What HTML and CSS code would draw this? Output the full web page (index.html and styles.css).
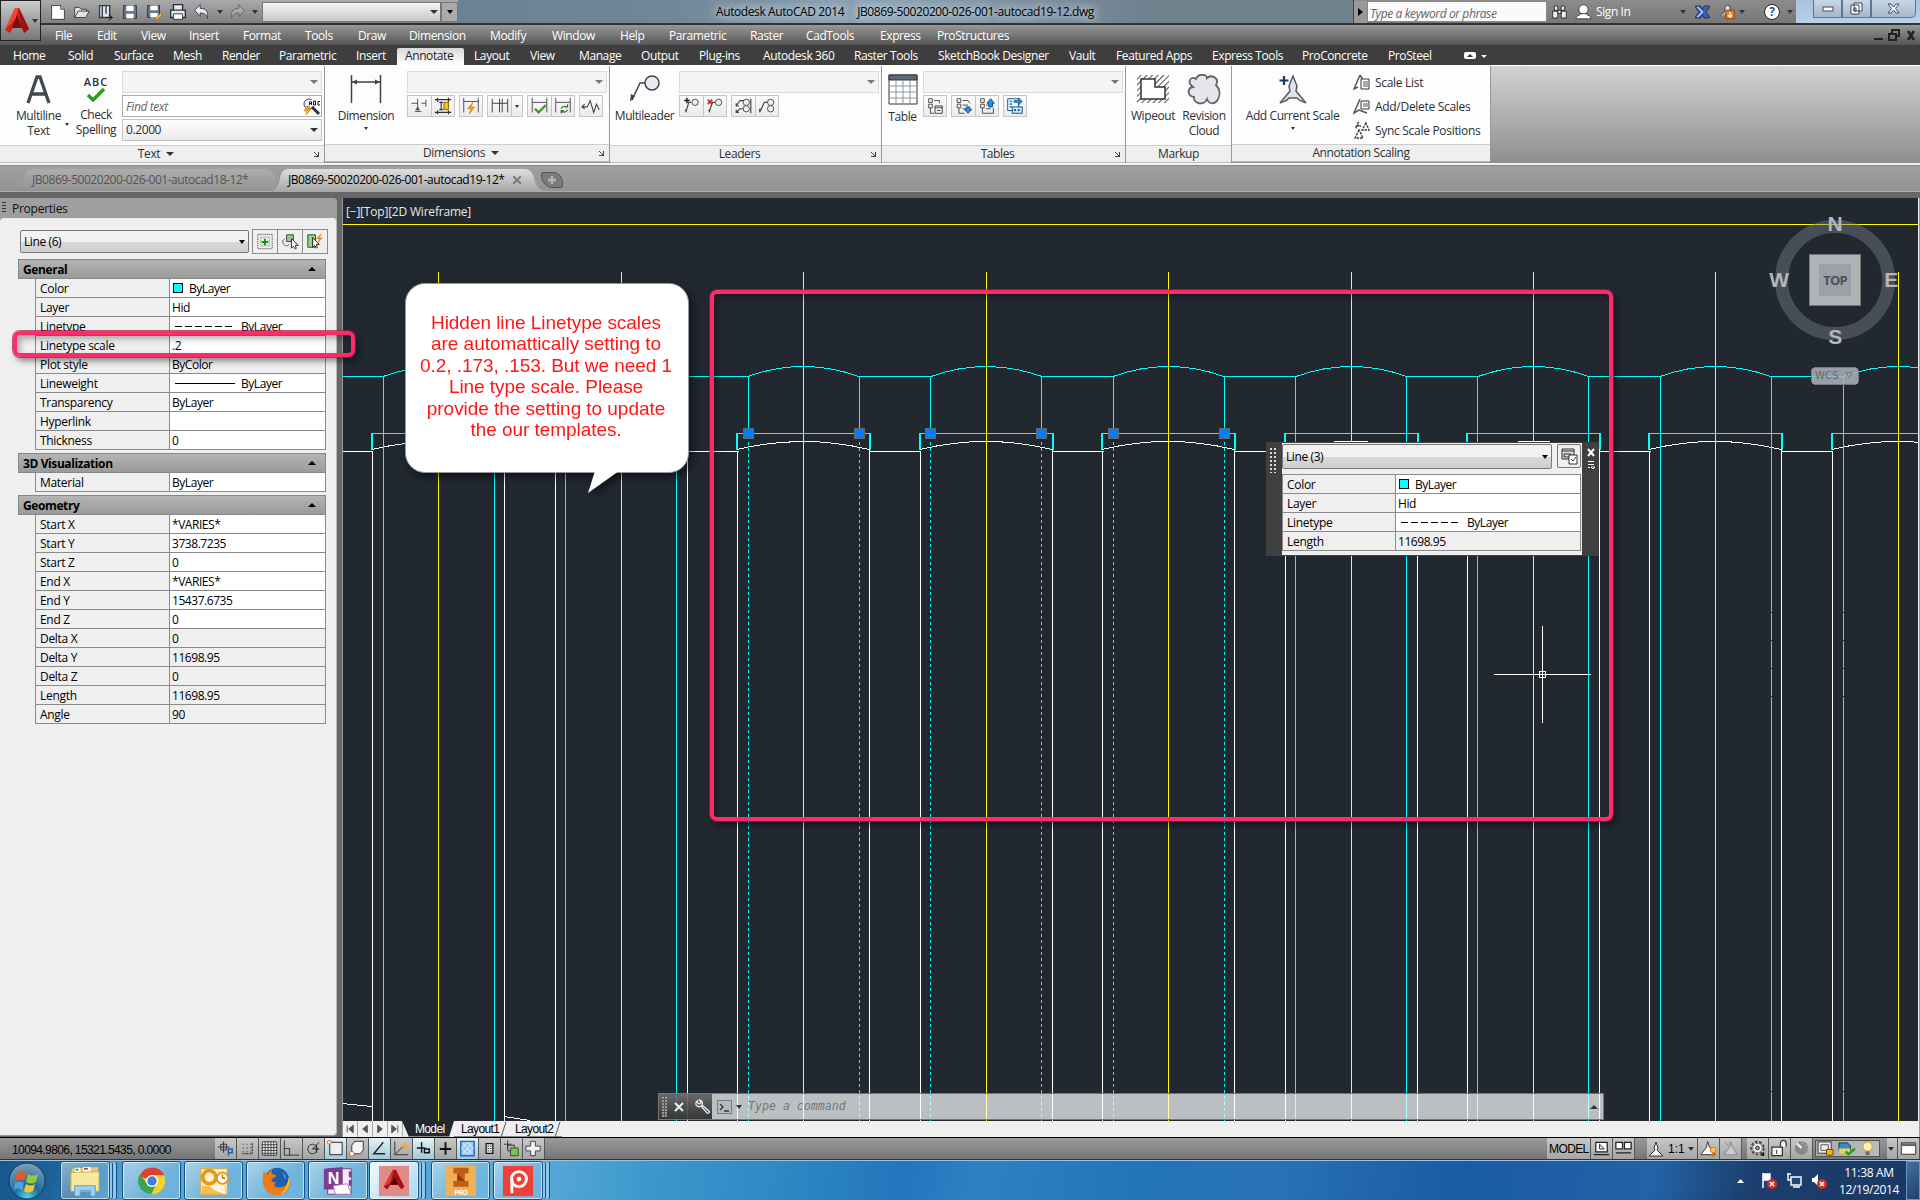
FILE: index.html
```
<!DOCTYPE html>
<html lang="en">
<head>
    <meta charset="UTF-8">
    <meta name="viewport" content="width=device-width, initial-scale=1.0">
    <title>Autodesk AutoCAD 2014</title>
    <link rel="stylesheet" href="styles.css">
</head>
<body>
    <div class="app">
        <!-- Title bar -->
        <header class="titlebar">
            <div class="quick-access">
                <svg class="qi" viewBox="0 0 24 24"><path d="M5 5h10l4 4v11H5z" fill="#fff" stroke="#333c46"/><path d="M15 5v4h4" fill="#ccc" stroke="#333c46"/></svg>
                <svg class="qi" viewBox="0 0 24 24"><path d="M4 18V7h5l2 2h6v3M4 18l4-7h12l-4 7z" fill="#dde3ea" stroke="#333c46"/></svg>
                <svg class="qi" viewBox="0 0 24 24"><path d="M5 5h11v13H5zM8 5v13M12 5v9" fill="#e4e8ee" stroke="#333c46" stroke-width="1.5"/><path d="M15 15l4 3-4 3M12 18h7" fill="none" stroke="#111"/></svg>
                <svg class="qi" viewBox="0 0 24 24"><path d="M5 5h14v14H5z" fill="#6b7889" stroke="#27313d"/><path d="M8 5h8v6H8zM8 14h8v5H8z" fill="#fff"/></svg>
                <svg class="qi" viewBox="0 0 24 24"><path d="M5 5h13v13H5z" fill="#6b7889" stroke="#27313d"/><path d="M8 5h8v5H8zM8 13h8v5H8z" fill="#fff"/><path d="M13 20l6-7 2 2-6 6z" fill="#f4b942" stroke="#8a5a10" stroke-width=".7"/></svg>
                <svg class="qi" viewBox="0 0 24 24"><path d="M7 10V4h10v6M4 10h16v8H4z" fill="#e8e8e8" stroke="#27313d" stroke-width="1.5"/><path d="M7 14h10v6H7z" fill="#fff" stroke="#27313d"/></svg>
                <svg class="qi" viewBox="0 0 24 24"><path d="M4 10l6-6v4c7 0 9 4 8 11-1-4-3-6-8-6v4z" fill="#e8edf2" stroke="#333c46"/></svg>
                <i class="caret"></i>
                <svg class="qi redo" viewBox="0 0 24 24"><path d="M20 10l-6-6v4c-7 0-9 4-8 11 1-4 3-6 8-6v4z" fill="#aaa" stroke="#666"/></svg>
                <i class="caret"></i>
                <div class="workspace"><i class="caret"></i></div>
                <div class="qa-more"><i class="caret"></i></div>
            </div>
            <div class="title"><span>Autodesk AutoCAD 2014</span><span>JB0869-50020200-026-001-autocad19-12.dwg</span></div>
            <div class="infocenter">
                <div class="ic-arrow"><svg width="6" height="8"><path d="M0 0l5 4-5 4z"/></svg></div>
                <div class="ic-search">Type a keyword or phrase</div>
                <svg class="ic-bino" viewBox="0 0 20 20"><path d="M4 3h4v5H4zM12 3h4v5h-4zM2 9h6v8H2zM12 9h6v8h-6zM8 8h4v4H8z" fill="#eee" stroke="#222"/></svg>
                <svg class="ic-user" viewBox="0 0 20 20"><circle cx="10" cy="7" r="5.500" fill="#fff" stroke="#333"/><path d="M1 18c0-4 5-4 6-6h6c1 2 6 2 6 6z" fill="#fff" stroke="#333"/></svg>
                <span class="sign-in">Sign In</span>
                <i class="caret"></i>
                <svg class="ic-x" viewBox="0 0 20 20"><path d="M2 3h6l2 4 2-4h6v2l-4 5 4 5v2h-6l-2-4-2 4H2v-2l4-5-4-5z" fill="#3b62b8" stroke="#17264f"/><path d="M4 4l6 6-6 6" fill="none" stroke="#cfe0ff" stroke-width="1.5"/></svg>
                <svg class="ic-360" viewBox="0 0 20 20"><path d="M2 15C2 12 6 12 7 9V5a3 3 0 0 1 6 0v4" fill="#ddd" stroke="#333"/><path d="M8 8h10v10H8z" fill="#f07c1b" stroke="#8a3d05"/><path d="M13 10v6M10.500 13.500l2.500 2.500 2.500-2.500" stroke="#fff" stroke-width="1.500" fill="none"/></svg>
                <i class="caret"></i>
                <b class="help">?</b>
                <i class="caret"></i>
            </div>
            <div class="window-controls">
                <div class="wc"><svg width="12" height="6"><path d="M1 1h10v4H1z" fill="#fff" stroke="#445"/></svg></div>
                <div class="wc"><svg width="13" height="13"><path d="M4 1h8v8H4zM1 3h8v9H1z" fill="#fff" stroke="#445"/><path d="M4 6h2v3H4z" stroke="#445" fill="none"/></svg></div>
                <div class="wc close"><svg width="13" height="11"><path d="M1 1h3l2.500 3L9 1h3L8.500 5.500 12 10H9L6.500 7 4 10H1l3.500-4.500z" fill="#fff" stroke="#445"/></svg></div>
            </div>
        </header>

        <!-- Menu bar -->
        <nav class="menubar">
            <span>File</span><span>Edit</span><span>View</span><span>Insert</span><span>Format</span><span>Tools</span><span>Draw</span><span>Dimension</span><span>Modify</span><span>Window</span><span>Help</span><span>Parametric</span><span>Raster</span><span>CadTools</span><span>Express</span><span>ProStructures</span>
            <svg class="doc-controls" width="46" height="14" viewBox="0 0 46 14"><path d="M2 11h9M17 6h7v6h-7zM20 5V2h7v6h-3" fill="none" stroke="#222" stroke-width="2"/><path d="M36 3l6 9M42 3l-6 9" stroke="#222" stroke-width="2.500"/></svg>
        </nav>
        <div class="app-button">
            <svg width="24" height="28" viewBox="0 0 24 28"><path d="M10 1h4l10 21-5 4-2-5H8l-3 5-5-3z" fill="#c8251b"/><path d="M10 1h3l-2 10-11 12z" fill="#ea4a35"/><path d="M12 8l5 13H7z" fill="#74100c"/><path d="M17 21l-2-9-1-11 10 21-5 4z" fill="#99150f"/></svg>
            <i class="caret"></i>
        </div>

        <!-- Ribbon tabs -->
        <nav class="ribbon-tabs">
            <span>Home</span><span>Solid</span><span>Surface</span><span>Mesh</span><span>Render</span><span>Parametric</span><span>Insert</span><span class="active">Annotate</span><span>Layout</span><span>View</span><span>Manage</span><span>Output</span><span>Plug-ins</span><span>Autodesk 360</span><span>Raster Tools</span><span>SketchBook Designer</span><span>Vault</span><span>Featured Apps</span><span>Express Tools</span><span>ProConcrete</span><span>ProSteel</span>
            <svg width="26" height="10" viewBox="0 0 26 10"><rect x="1" y="1" width="12" height="7" rx="2" fill="#fff"/><path d="M4 6l3-3 3 3z" fill="#333"/><path d="M18 4h6l-3 3z" fill="#eee"/></svg>
        </nav>

        <!-- Ribbon -->
        <div class="ribbon">
            <section class="panel p-text">
                <div class="panel-body">
                    <div class="big-btn">
                        <svg width="28" height="30" viewBox="0 0 28 30"><path d="M3 29L12 3h3l9 26M6 20h15" fill="none" stroke="#414850" stroke-width="3.300"/></svg>
                        <span>Multiline<br>Text</span>
                    </div>
                    <div class="big-btn">
                        <div class="abc">ABC<svg width="18" height="14" viewBox="0 0 18 14"><path d="M1 7l5 5L17 1" fill="none" stroke="#2f9a17" stroke-width="3.500"/></svg></div>
                        <span>Check<br>Spelling</span>
                    </div>
                    <i class="caret split"></i>
                    <div class="controls">
                        <div class="combo dim"><i class="caret"></i></div>
                        <div class="combo find"><span>Find text</span><svg width="18" height="18" viewBox="0 0 18 18"><circle cx="6" cy="6" r="5" fill="#eef" stroke="#445"/><path d="M9 9l7 7" stroke="#333" stroke-width="3"/><path d="M4 8l-3 5h3l-1 4 5-6H5l2-3z" fill="#f7a51c" stroke="#b56a00" stroke-width=".5"/><path d="M6 2h12v6H6z" fill="#fff"/><path d="M6.500 7V4l1-1 1 1v3M7 5.500h2M10.500 3v4h2V3zM17 3.500h-2v3.500h2" stroke="#111" fill="none"/></svg></div>
                        <div class="combo">0.2000<i class="caret"></i></div>
                    </div>
                </div>
                <div class="panel-title">Text<i class="caret"></i><b class="launcher"></b></div>
            </section>
            <section class="panel p-dim">
                <div class="panel-body">
                    <div class="big-btn">
                        <svg width="32" height="30" viewBox="0 0 32 30"><path d="M1.500 1v28M30.500 1v28M2 8h28" stroke="#3c434b" stroke-width="1.500"/><path d="M2 8l5-2.500v5zM30 8l-5-2.500v5z" fill="#3c434b"/></svg>
                        <span>Dimension</span><i class="caret"></i>
                    </div>
                    <div class="controls">
                        <div class="combo dim"><i class="caret"></i></div>
                        <div class="tools">
                            <div class="grp">
                                <svg viewBox="0 0 24 22"><path d="M3 8h7M10 3v14M7 17h7M14 8h5M19 4v8M10 12l-2 3h4z" fill="none" stroke="#444b55"/></svg>
                                <svg viewBox="0 0 24 22"><path d="M3 4h18M3 18h18M6 2v5M18 2v5M6 16v4M18 16v4M8 7h4M10 7v8M8 15h4" stroke="#333" stroke-width="1.300"/><path d="M13 7h5v8h-5z" fill="#f6c21c" stroke="#7d5c00"/></svg>
                            </div>
                            <div class="grp"><svg viewBox="0 0 24 22"><path d="M4 2v16M20 2v16M4 6h16" stroke="#444"/><path d="M14 7l-6 7h4l-2 6 6-8h-4z" fill="#f7a51c" stroke="#c06c00" stroke-width=".6"/></svg></div>
                            <div class="grp"><svg viewBox="0 0 24 22"><path d="M4 3v15M12 3v15M15 3v15M21 3v15M4 8h17" stroke="#333"/></svg><em><i class="caret"></i></em></div>
                            <div class="grp">
                                <svg viewBox="0 0 24 22"><path d="M4 2v16M20 2v16M4 7h16" stroke="#444"/><path d="M7 14l4 4 8-8" fill="none" stroke="#36a31b" stroke-width="2.500"/></svg>
                                <svg viewBox="0 0 24 22"><path d="M4 2v16M20 2v16M4 7h16" stroke="#444"/><path d="M10 14a4 4 0 0 1 6-2l1-1M17 15a4 4 0 0 1-6 2l-1 2M17 9v3h-3M10 19v-3h3" fill="none" stroke="#2b7d1c" stroke-width="1.300"/></svg>
                            </div>
                            <div class="grp"><svg viewBox="0 0 24 22"><path d="M2 12h6M8 12l3-7 4 13 3-9 3 6M5 9l-3 3 3 2" fill="none" stroke="#3c434b" stroke-width="1.200"/></svg></div>
                        </div>
                    </div>
                </div>
                <div class="panel-title">Dimensions<i class="caret"></i><b class="launcher"></b></div>
            </section>
            <section class="panel p-lead">
                <div class="panel-body">
                    <div class="big-btn">
                        <svg width="32" height="30" viewBox="0 0 32 30"><circle cx="23" cy="9" r="7" fill="#e9ecf0" stroke="#3c434b" stroke-width="1.500"/><path d="M16 9h-5L3 26" fill="none" stroke="#3c434b" stroke-width="1.500"/><path d="M1 28l1-8 4 2z" fill="#3c434b"/></svg>
                        <span>Multileader</span>
                    </div>
                    <div class="controls">
                        <div class="combo dim"><i class="caret"></i></div>
                        <div class="tools">
                            <div class="grp">
                                <svg viewBox="0 0 24 22"><circle cx="16" cy="7" r="3.500" fill="#eee" stroke="#444"/><path d="M12 7H9L6 17l-1-2" fill="none" stroke="#444" stroke-width="1.300"/><path d="M7 2v6M4 5h6" stroke="#111" stroke-width="1.500"/></svg>
                                <svg viewBox="0 0 24 22"><circle cx="16" cy="7" r="3.500" fill="#eee" stroke="#444"/><path d="M12 7H9L6 17l-1-2" fill="none" stroke="#444" stroke-width="1.300"/><path d="M4 4l5 5M9 4L4 9" stroke="#d02020" stroke-width="1.800"/></svg>
                            </div>
                            <div class="grp">
                                <svg viewBox="0 0 24 22"><circle cx="15" cy="7" r="3.500" fill="#eee" stroke="#444"/><circle cx="15" cy="14" r="3.500" fill="#eee" stroke="#444"/><path d="M20 3v16M12 5H8l-4 6M4 8v3h3M12 14H8l-4 4M4 15v3h3" fill="none" stroke="#444" stroke-width="1.300"/></svg>
                                <svg viewBox="0 0 24 22"><circle cx="16" cy="7" r="3.500" fill="#eee" stroke="#444"/><circle cx="16" cy="14" r="3.500" fill="#eee" stroke="#444"/><path d="M12 7H9L4 18v-4" fill="none" stroke="#444" stroke-width="1.300"/></svg>
                            </div>
                        </div>
                    </div>
                </div>
                <div class="panel-title">Leaders<b class="launcher"></b></div>
            </section>
            <section class="panel p-table">
                <div class="panel-body">
                    <div class="big-btn">
                        <svg width="30" height="31" viewBox="0 0 30 31"><path d="M1 1h28v29H1z" fill="#fff" stroke="#30363d"/><path d="M1 1h28v5H1z" fill="#5c6b7c" stroke="#30363d"/><path d="M8 6v23M15 6v23M22 6v23M2 12h26M2 18h26M2 24h26" stroke="#8f959c"/></svg>
                        <span>Table</span>
                    </div>
                    <div class="controls">
                        <div class="combo dim"><i class="caret"></i></div>
                        <div class="tools">
                            <div class="grp"><svg viewBox="0 0 24 22"><path d="M5 3h4v4H5zM5 9h4v4H5zM7 13v6h4M11 5h6v3" fill="none" stroke="#444"/><path d="M12 11h8v8h-8zM12 13h8M14 16h4" fill="#fff" stroke="#333"/></svg></div>
                            <div class="grp">
                                <svg viewBox="0 0 24 22"><path d="M5 3h4v4H5zM5 9h4v4H5zM7 13v6h6M11 5h6l2 3M11 10h6M11 14h3" fill="none" stroke="#444"/><path d="M15 12h4v3h2l-4 4-4-4h2z" fill="#2f8fe0" stroke="#0b4680"/></svg>
                                <svg viewBox="0 0 24 22"><path d="M5 3h4v4H5zM5 9h4v4H5zM7 13v6h12v-6M11 10h3M11 14h5" fill="none" stroke="#444"/><path d="M14 12h4V8h2l-4-5-4 5h2z" fill="#2f8fe0" stroke="#0b4680"/></svg>
                            </div>
                            <div class="grp"><svg viewBox="0 0 24 22"><path d="M4 3h12v13H4z" fill="#fff" stroke="#0b4680"/><path d="M6 6h3M6 9h3M6 12h3" stroke="#2f8fe0" stroke-width="2"/><path d="M11 5h5V2l4 4-4 4V7h-5z" fill="#2f8fe0" stroke="#0b4680" stroke-width=".7"/><path d="M9 12h11v7H9z" fill="#cfe5fb" stroke="#0b4680"/><path d="M11 15.500h7" stroke="#0b4680" stroke-width="2" stroke-dasharray="2"/></svg></div>
                        </div>
                    </div>
                </div>
                <div class="panel-title">Tables<b class="launcher"></b></div>
            </section>
            <section class="panel p-markup">
                <div class="panel-body">
                    <div class="big-btn">
                        <svg width="34" height="30" viewBox="0 0 34 30"><defs><pattern id="hatch" width="4" height="4" patternUnits="userSpaceOnUse" patternTransform="rotate(45)"><path d="M0 0v4" stroke="#555" stroke-width="2"/></pattern></defs><path d="M1 1h32v28H1z" fill="url(#hatch)"/><path d="M5 5h14v8h10v12H5z" fill="#fff" stroke="#333" stroke-width="1.500"/></svg>
                        <span>Wipeout</span>
                    </div>
                    <div class="big-btn">
                        <svg width="34" height="31" viewBox="0 0 34 31"><path d="M9 5C11-1 20 0 20 4c4-4 13 0 9 7 4 4 5 10 1 16-5 5-9 1-10-2-3 7-14 5-13-2-7-1-7-9-1-10C0 9 3 1 9 5z" fill="#e4e6ea" stroke="#5f656d" stroke-width="1.800"/></svg>
                        <span>Revision<br>Cloud</span>
                    </div>
                </div>
                <div class="panel-title">Markup</div>
            </section>
            <section class="panel p-anno">
                <div class="panel-body">
                    <div class="big-btn">
                        <svg width="30" height="31" viewBox="0 0 30 31"><path d="M15 2l4 10-1 5 10 12c-5-2-8-3-9-5h-8c-2 3-4 3-9 5l10-12-1-5z" fill="#e0e3e8" stroke="#555c66" stroke-width="1.500"/><path d="M6 2v9M1.500 6.500h9" stroke="#123a6b" stroke-width="2.200"/></svg>
                        <span>Add Current Scale</span><i class="caret"></i>
                    </div>
                    <ul class="list">
                        <li><svg viewBox="0 0 18 18"><path d="M7 2L1 16l4-2M7 2l3 5" fill="none" stroke="#555" stroke-width="1.500"/><path d="M8 6h8v10H8z" fill="#fff" stroke="#333"/><path d="M10 9h5M10 11h5M10 13h5" stroke="#555"/></svg>Scale List</li>
                        <li><svg viewBox="0 0 18 18"><path d="M7 2L1 16l5-3 8 3" fill="none" stroke="#555" stroke-width="1.500"/><path d="M8 4h8v8H8z" fill="#fff" stroke="#333"/><path d="M10 7h5M10 9h5" stroke="#555"/></svg>Add/Delete Scales</li>
                        <li><svg viewBox="0 0 18 18"><path d="M3 5h5M3 5v3M6 1L4 3l2 2M13 2l-4 7h7zM6 9l-4 8h8z" fill="none" stroke="#333" stroke-width="1.300" stroke-dasharray="2.500 1"/></svg>Sync Scale Positions</li>
                    </ul>
                </div>
                <div class="panel-title">Annotation Scaling</div>
            </section>
        </div>

        <!-- Open drawings -->
        <div class="file-tabs">
            <div class="file-tab">JB0869-50020200-026-001-autocad18-12*</div>
            <div class="file-tab current">JB0869-50020200-026-001-autocad19-12*<svg width="8" height="8"><path d="M0 0l8 8M8 0L0 8" stroke="#7d7d7d" stroke-width="2"/></svg></div>
            <div class="new-tab"><svg width="10" height="10"><path d="M5 1v8M1 5h8" stroke="#b5b5b5" stroke-width="2.500"/></svg></div>
        </div>

        <main class="workarea">
            <!-- Properties palette -->
            <aside class="properties">
                <div class="prop-title"><i class="grip"></i>Properties</div>
                <div class="prop-body">
                    <div class="selector">
                        <div class="select">Line (6)<i class="caret"></i></div>
                        <div class="sel-tools">
                            <svg viewBox="0 0 25 24"><path d="M5 4.500h15v15H5z" fill="none" stroke="#333" stroke-dasharray="1 1"/><path d="M8 7.500h9v9H8z" fill="none" stroke="#777" stroke-dasharray="1 1"/><path d="M12.500 9v7M9 12.500h7" stroke="#0a9a0a" stroke-width="2"/></svg>
                            <svg viewBox="0 0 25 24"><path d="M9 5h7v7H9z" fill="#9ccf8d" stroke="#1d5a12"/><path d="M7 9a4 4 0 1 0 5 6" fill="none" stroke="#667"/><path d="M14 9v10l2-2 2 3 1-1-1-3h3z" fill="#fff" stroke="#222"/></svg>
                            <svg viewBox="0 0 25 24"><path d="M5 5h8v13H5z" fill="#9ccf8d" stroke="#1d5a12"/><path d="M10 8v10l2-2 2 3 1-1-1-3h3z" fill="#fff" stroke="#222"/><path d="M19 4l-5 5h3l-2 5 5-6h-3z" fill="#f7a51c" stroke="#c06c00" stroke-width=".5"/></svg>
                        </div>
                    </div>
                    <div class="group">
                        <h3>General<i></i></h3>
                        <dl>
                            <dt>Color</dt><dd><b class="swatch"></b>ByLayer</dd>
                            <dt>Layer</dt><dd>Hid</dd>
                            <dt>Linetype</dt><dd><b class="ltype"></b>ByLayer</dd>
                            <dt>Linetype scale</dt><dd>.2</dd>
                            <dt>Plot style</dt><dd class="ro">ByColor</dd>
                            <dt>Lineweight</dt><dd><b class="lweight"></b>ByLayer</dd>
                            <dt>Transparency</dt><dd>ByLayer</dd>
                            <dt>Hyperlink</dt><dd></dd>
                            <dt>Thickness</dt><dd>0</dd>
                        </dl>
                    </div>
                    <div class="group">
                        <h3>3D Visualization<i></i></h3>
                        <dl><dt>Material</dt><dd>ByLayer</dd></dl>
                    </div>
                    <div class="group">
                        <h3>Geometry<i></i></h3>
                        <dl>
                            <dt>Start X</dt><dd>*VARIES*</dd>
                            <dt>Start Y</dt><dd>3738.7235</dd>
                            <dt>Start Z</dt><dd>0</dd>
                            <dt>End X</dt><dd>*VARIES*</dd>
                            <dt>End Y</dt><dd>15437.6735</dd>
                            <dt>End Z</dt><dd>0</dd>
                            <dt>Delta X</dt><dd class="ro">0</dd>
                            <dt>Delta Y</dt><dd class="ro">11698.95</dd>
                            <dt>Delta Z</dt><dd class="ro">0</dd>
                            <dt>Length</dt><dd class="ro">11698.95</dd>
                            <dt>Angle</dt><dd class="ro">90</dd>
                        </dl>
                    </div>
                </div>
            </aside>

            <section class="viewport">
                <svg class="drawing" viewBox="343 198 1575 923">
                    <defs>
                        <!-- one tube bay, x = 0 on its centre line -->
                        <g id="bay">
                            <path class="c" d="M-55 376.500Q0 356.500 56 376.500H128M-66 433.500H67"/>
                            <path class="c thick" d="M-66 433v17M67 433v17"/>
                            <path class="w" d="M-65.500 451V1121M66.500 451V1121M-66 449.500Q0 433.500 66 449.500V451.500H118"/>
                        </g>
                        <g id="sides"><path class="c" d="M-54.500 376V1121M56.500 376V1121"/></g>
                        <g id="hidden">
                            <path class="c" d="M-54.500 376V433M56.500 376V433"/>
                            <path class="c" d="M-54.500 436V1121M56.500 436V1121" stroke-dasharray="3 3"/>
                            <path class="grip-box" d="M-59.500 428.500h10v10h-10zM51.500 428.500h10v10h-10z"/>
                        </g>
                    </defs>
                    <path class="y" d="M342 224.500H1918"/>
                    <path class="c" d="M342 376.500H383"/>
                    <path class="w" d="M342 451.500H372M342 1103.500L372 1106.500M504 1116.500L530 1120.500"/>
                    <use href="#bay" x="438"/><use href="#sides" x="438"/>
                    <use href="#bay" x="621"/><use href="#sides" x="620"/>
                    <use href="#bay" x="803"/>
                    <use href="#bay" x="986"/>
                    <use href="#bay" x="1168"/>
                    <use href="#bay" x="1351"/><use href="#sides" x="1350"/>
                    <use href="#bay" x="1533"/><use href="#sides" x="1532"/>
                    <use href="#bay" x="1715"/><use href="#sides" x="1715"/>
                    <use href="#bay" x="1898"/><use href="#sides" x="1898"/>
                    <path class="gap" d="M1771.500 612v1m0 27v1m0 27v1m0 27v1m0 394v1M1843.500 612v1m0 27v1m0 27v1m0 27v1m0 394v1"/>
                    <path class="y" d="M438.500 272V1121M621.500 272V1121M803.500 272V1121M986.500 272V1121M1168.500 272V1121M1351.500 272V1121M1533.500 272V1121M1715.500 272V1121M1898.500 272V1121"/>
                    <use href="#hidden" x="803"/><use href="#hidden" x="985"/><use href="#hidden" x="1168"/>
                    <path class="w" d="M1494 674.500h97M1542.500 626v97M1539.500 671.500h6v6h-6z"/>
                    <!-- view cube -->
                    <circle cx="1835" cy="280" r="53.500" fill="none" stroke="#777c82" stroke-opacity=".45" stroke-width="13"/>
                    <path d="M1809.500 254.500h51v51h-51z" fill="#b0b2b4" stroke="#74787c"/>
                    <path d="M1819 264h32v32h-32z" fill="#9ba1a6"/>
                    <text class="top" x="1835" y="284.500">TOP</text>
                    <g class="compass"><text x="1835" y="231">N</text><text x="1835" y="344">S</text><text x="1779" y="287">W</text><text x="1891" y="287">E</text></g>
                    <rect x="1811.500" y="367.500" width="47" height="17" rx="4" fill="#a9adb8" fill-opacity=".88" stroke="#777b84"/>
                    <text class="wcs" x="1815" y="379">WCS</text>
                    <path d="M1845 372h8l-4 5z" fill="none" stroke="#7e828a"/>
                </svg>
                <div class="view-label">[−][Top][2D Wireframe]</div>

                <!-- quick properties -->
                <div class="quick-props">
                    <i class="qp-grip"></i>
                    <div class="qp-body">
                        <div class="qp-head">
                            <div class="select">Line (3)<i class="caret"></i></div>
                            <div class="qp-btn"><svg width="17" height="18" viewBox="0 0 17 18"><path d="M1 2h12v10H1zM1 4h12M3 7h7v3H3z" fill="#ddd" stroke="#333"/><path d="M8 8h8v9H8z" fill="#fff" stroke="#333"/><path d="M10 12l2 2 3-4" stroke="#333" fill="none"/></svg></div>
                        </div>
                        <dl>
                            <dt>Color</dt><dd><b class="swatch"></b>ByLayer</dd>
                            <dt>Layer</dt><dd>Hid</dd>
                            <dt>Linetype</dt><dd><b class="ltype"></b>ByLayer</dd>
                            <dt>Length</dt><dd class="ro">11698.95</dd>
                        </dl>
                    </div>
                    <svg class="qp-side" width="16" height="30" viewBox="0 0 16 30"><path d="M6 6l6 7M12 6l-6 7" stroke="#fff" stroke-width="2"/><path d="M6 18.500h6M6 21.500h6M6 24.500h2M9 24h4l-2 2z" stroke="#fff"/></svg>
                </div>

                <!-- command line -->
                <div class="command">
                    <div class="cmd-tools"><i></i><svg width="10" height="10"><path d="M1 1l8 8M9 1L1 9" stroke="#eee" stroke-width="2"/></svg><svg width="16" height="16" viewBox="0 0 16 16"><path d="M6 1a4 4 0 0 0-4 5c2 2 4 2 5 1l6 7c2 1 3-1 2-2L8 6C9 4 8 2 6 1l1 3-2 1-2-2" fill="#555" stroke="#eee" stroke-width="1.200"/></svg></div>
                    <div class="cmd-input"><svg width="15" height="14"><path d="M.5.5h14v13H.5z" fill="#b3bac2" stroke="#737b86"/><path d="M3 4l3 3-3 3M7 11h5" fill="none" stroke="#333" stroke-width="1.300"/></svg><i class="caret"></i><span>Type a command</span><i class="caret up"></i></div>
                </div>

                <div class="layout-tabs">
                    <div class="nav"><svg viewBox="0 0 15 16"><path d="M4.500 4v8M11 4v8L6 8z"/></svg><svg viewBox="0 0 15 16"><path d="M10 4v8L5 8z"/></svg><svg viewBox="0 0 15 16"><path d="M5 4v8l5-4z"/></svg><svg viewBox="0 0 15 16"><path d="M10.500 4v8M4 4v8l5-4z"/></svg></div>
                    <span class="lt on">Model</span><span class="lt">Layout1</span><span class="lt">Layout2</span>
                </div>
            </section>
        </main>

        <!-- Status bar -->
        <footer class="statusbar">
            <div class="coords">10094.9806, 15321.5435, 0.0000</div>
            <div class="toggles">
                <svg viewBox="0 0 22 21"><path d="M9 3v12M3 9h12M6 6h6v6H6z" fill="none" stroke="#2a333d"/><path d="M14 18v-7h4v4h-4" fill="none" stroke="#1763ad" stroke-width="1.500"/></svg>
                <svg viewBox="0 0 22 21"><path d="M6 6h9M6 10h9M6 14h9" stroke="#222" stroke-dasharray="1 3"/><path d="M16 5v11H5" fill="none" stroke="#222" stroke-dasharray="2 1"/></svg>
                <svg viewBox="0 0 22 21"><path d="M3.500 3.500h15v14h-15zM6.500 3v15M9.500 3v15M12.500 3v15M15.500 3v15M3 6.500h16M3 9.500h16M3 12.500h16M3 15.500h16" fill="#eee" stroke="#222" stroke-width=".8"/></svg>
                <svg viewBox="0 0 22 21"><path d="M3.500 2v15.500H19M3 10.500h6v7" fill="none" stroke="#333"/></svg>
                <svg viewBox="0 0 22 21"><circle cx="10" cy="11" r="5" fill="none" stroke="#333"/><path d="M10 11l7-7M10 11h7M14 7v8" stroke="#222"/></svg>
                <svg class="on" viewBox="0 0 22 21"><path d="M5 4h13v13H5z" fill="#eee" stroke="#222"/><circle cx="4.500" cy="4" r="2" fill="#fff" stroke="#e0590f"/></svg>
                <svg viewBox="0 0 22 21"><path d="M5 7l3-4h9v9l-3 4H5z" fill="#f5f5f5" stroke="#333"/><circle cx="5" cy="16" r="2.500" fill="#fff" stroke="#e0590f"/></svg>
                <svg class="on" viewBox="0 0 22 21"><path d="M15 4L5 16h12" fill="none" stroke="#222" stroke-width="1.500"/></svg>
                <svg viewBox="0 0 22 21"><path d="M4 3v14h14M4 17L13 8" fill="none" stroke="#333"/><path d="M16 3l-5 6h3l-1 4 5-6h-3z" fill="#f7a51c"/></svg>
                <svg class="on" viewBox="0 0 22 21"><path d="M9 4v11M4 10h9M12 11h5v4h-5z" fill="none" stroke="#111" stroke-width="1.500"/></svg>
                <svg viewBox="0 0 22 21"><path d="M11 4v13M5 11h12" stroke="#111" stroke-width="2"/></svg>
                <svg class="on" viewBox="0 0 22 21"><path d="M4 3h14v15H4z" fill="#9cc8ee" stroke="#2b6ab0" stroke-width="1.500"/><path d="M6 5l10 11M16 5L6 16M11 4l6 6-6 7-6-7z" stroke="#e3f1fd" fill="none"/></svg>
                <svg viewBox="0 0 22 21"><path d="M7.500 5.500h7v10h-7z" fill="#eee" stroke="#111" stroke-width="1.300"/><path d="M9 8h4M9 10.500h4M9 13h4" stroke="#222" stroke-dasharray="1.500 1"/></svg>
                <svg viewBox="0 0 22 21"><path d="M7 2v8M3 6h8M7 7h7v6H7z" fill="none" stroke="#333"/><path d="M10 10h8v8h-8z" fill="#7ebf5e" stroke="#1c5d10"/></svg>
                <svg viewBox="0 0 22 21"><path d="M8 3h5v5h5v5h-5v5H8v-5H3V8h5z" fill="#f3f3f3" stroke="#39424d"/></svg>
            </div>
            <div class="status-right">
                <span class="model">MODEL</span>
                <svg class="b" viewBox="0 0 22 21"><path d="M5 4h12v10H5zM3 17h16" fill="#fff" stroke="#222" stroke-width="1.300"/><path d="M9 6v5h5z" fill="none" stroke="#222"/></svg>
                <svg class="b" viewBox="0 0 22 21"><path d="M3 4h7v7H3zM12 4h7v7h-7zM3 15h16" fill="#fff" stroke="#222" stroke-width="1.300"/></svg>
                <span class="scale"><svg width="18" height="18" viewBox="0 0 18 18"><path d="M9 2l2 6-1 2 6 6H2l6-6-1-2z" fill="#fff" stroke="#333"/></svg>1:1<i class="caret"></i></span>
                <svg class="b" viewBox="0 0 22 21"><path d="M10 3l2 6 6 8H3l6-8z" fill="#fff" stroke="#333"/><circle cx="16" cy="12" r="3" fill="#ffc44a" stroke="#d67800"/><path d="M15 15h2v4h-2z" fill="#d67800"/></svg>
                <svg class="b" viewBox="0 0 22 21"><path d="M11 3l2 6 5 8H4l6-8zM5 4l4 4" fill="#ccc" stroke="#888"/></svg>
                <em></em>
                <svg class="b" viewBox="0 0 22 21"><circle cx="11" cy="10" r="6.500" fill="#f1f1f1" stroke="#444" stroke-width="2" stroke-dasharray="3 1.500"/><circle cx="11" cy="10" r="5" fill="#f1f1f1" stroke="#666"/><circle cx="11" cy="10" r="2" fill="#999" stroke="#333"/><path d="M14 18h4v-4z"/></svg>
                <svg class="b" viewBox="0 0 22 21"><path d="M3 9h11v9H3zM12 9V5a3 3 0 0 1 6 0v4" fill="#f4f4f4" stroke="#333" stroke-width="1.300"/><path d="M8 12v4" stroke="#333"/></svg>
                <svg class="b" viewBox="0 0 22 21"><circle cx="11" cy="10" r="7" fill="#85898d"/><path d="M6 5l5 5" stroke="#eee" stroke-width="2.500"/><path d="M12 5l1 1M15 7l1 1M16 11h1" stroke="#ddd"/></svg>
                <span class="tray">
                    <svg viewBox="0 0 22 16"><path d="M2 1h14v12H2z" fill="#eee" stroke="#333"/><path d="M5 4h8v6H5z" fill="none" stroke="#555"/><path d="M11 9h7v6h-7z" fill="#f0b620" stroke="#6b4d00"/></svg>
                    <svg viewBox="0 0 22 16"><path d="M2 2h9l3 3v6H2z" fill="#3c88c9" stroke="#134"/><path d="M2 8h12v5H2z" fill="#e8d65a"/><path d="M9 11l3 3 7-6" stroke="#2c9a18" stroke-width="2.500" fill="none"/></svg>
                    <svg viewBox="0 0 22 16"><circle cx="10" cy="6" r="5" fill="#ffeeb0" stroke="#c9962b"/><path d="M8 11h4v4H8z" fill="#667"/></svg>
                </span>
                <span class="drop"><i class="caret"></i></span>
                <svg class="b" viewBox="0 0 22 21"><path d="M3.500 4.500h15v12h-15z" fill="#fff" stroke="#333"/><path d="M4 5h14v3H4z" fill="#5c6b7c"/></svg>
            </div>
        </footer>

        <!-- Taskbar -->
        <footer class="taskbar">
            <svg class="start" viewBox="0 0 40 39"><defs><radialGradient id="orb" cx=".5" cy=".95" r=".9"><stop offset="0" stop-color="#49d6f5"/><stop offset=".4" stop-color="#1b6d9e"/><stop offset="1" stop-color="#7d9bb3"/></radialGradient></defs><circle cx="20" cy="20" r="18" fill="url(#orb)" stroke="#12385c"/><path d="M10 12q5-3 9 0l-2 8q-4-3-9 0z" fill="#e8572a"/><path d="M21 13q5 3 10 0l-2 8q-5 3-10 0z" fill="#8fc73e"/><path d="M8 22q4-3 9 0l-2 7q-4-3-8 0z" fill="#49a4e0"/><path d="M19 23q5 3 9 0l-2 7q-5 3-9 0z" fill="#fbc52d"/></svg>
            <div class="task stack"><svg viewBox="0 0 34 34"><path d="M3 4l28-2v22H3z" fill="#e5c96b"/><path d="M6 3h6v6H6zM15 2h8v6h-8z" fill="#fff"/><path d="M7 4h3v2H7z" fill="#2da33b"/><path d="M16 3h4v2h-4z" fill="#d5382a"/><path d="M2 8l30-1v21H2z" fill="#f8e7a0" stroke="#cfa945"/><path d="M6 33V22h22v11h-5v-6H12v6z" fill="#9fd2ee" stroke="#5d9fc9"/></svg></div>
            <div class="task"><svg viewBox="0 0 34 34"><circle cx="17" cy="17" r="14" fill="#f9d229"/><path d="M17 17L4 12A14 14 0 0 1 30 11H17z" fill="#dc4033"/><path d="M4 10a14 14 0 0 0 12 21l6-11-10 0z" fill="#3ba451"/><circle cx="17" cy="17" r="6.500" fill="#fff"/><circle cx="17" cy="17" r="5" fill="#3f7fd8"/></svg></div>
            <div class="task"><svg viewBox="0 0 34 34"><path d="M3 4h28v27H3z" fill="#fff3cf" stroke="#e7a720"/><circle cx="12" cy="13" r="7" fill="none" stroke="#ea9a10" stroke-width="4"/><path d="M4 22h26v9H4z" fill="#f5c04a"/><path d="M12 22h17v9L18 27z" fill="#fff6dd"/><circle cx="26" cy="14" r="6" fill="#fff" stroke="#e09a20" stroke-width="2"/><path d="M26 10v4h3" stroke="#b97500" fill="none" stroke-width="1.500"/></svg></div>
            <div class="task"><svg viewBox="0 0 34 34"><circle cx="18" cy="16" r="13" fill="#1f5fae"/><path d="M24 7c2 4 4 5 3 9z" fill="#5fb5e8"/><path d="M4 7c-3 10-1 24 13 25s17-13 14-20c-1 8-4 12-11 12-5 0-6-4-3-6-5 1-6-3-3-4 3-1 4-3 1-4-3 0-3-2-2-5-4 1-4 4-5 5z" fill="#ee7b1a"/><path d="M31 12c2 8-2 18-10 19 7-4 8-10 10-19z" fill="#fbc52d"/></svg></div>
            <div class="task wide"><svg viewBox="0 0 34 34"><path d="M6 4h25v27H6z" fill="#f2ebf5" stroke="#7d3a91"/><path d="M2 4l20-2v24H2z" fill="#7e3d92"/><text x="12" y="20" text-anchor="middle">N</text><path d="M12 22l15-2 4 11H14z" fill="#fff" stroke="#a77fb5"/><path d="M30 7v6M30 16v6" stroke="#7e3d92" stroke-width="3"/></svg></div>
            <div class="task stack lit"><svg viewBox="0 0 34 34"><path d="M1 1h32v32H1z" fill="#e08a8a"/><path d="M16 5h3l9 18-3 3-4-5h-8l-3 5-4-3z" fill="#a3120e"/><path d="M17 5l-4 14-7 4z" fill="#e8362a"/><path d="M18 13l3 8h-8z" fill="#400"/></svg></div>
            <div class="task"><svg viewBox="0 0 34 34"><path d="M1 1h32v32H1z" fill="#f3ae58"/><path d="M9 3h16v6h-4v8h4v6H9v-6h4V9H9z" fill="#c05c14"/><path d="M13 9l8 8h-8z" fill="#8e3c08"/><text class="pro" x="17" y="32" text-anchor="middle">PRO</text></svg></div>
            <div class="task stack"><svg viewBox="0 0 34 34"><path d="M1 1h32v32H1z" fill="#ec4038"/><circle cx="18" cy="15" r="8" fill="none" stroke="#fff" stroke-width="3"/><circle cx="18" cy="15" r="2.500" fill="#fff"/><path d="M10.500 14v16" stroke="#fff" stroke-width="3"/></svg></div>
            <div class="systray">
                <svg width="9" height="6"><path d="M1 5l3.500-4L8 5z" fill="#fff"/></svg>
                <svg width="17" height="16" viewBox="0 0 17 16"><path d="M2 0v15M2 1h7v6H2" fill="#fff" stroke="#fff" stroke-width="1.500"/><circle cx="11" cy="11" r="5" fill="#d92c1e"/><path d="M9 9l4 4M13 9l-4 4" stroke="#fff" stroke-width="1.500"/></svg>
                <svg width="17" height="16" viewBox="0 0 17 16"><path d="M5 4h10v8H5zM7 14h7M2 1v6h3M1 1h4" fill="#23476f" stroke="#fff" stroke-width="1.400"/></svg>
                <svg width="17" height="16" viewBox="0 0 17 16"><path d="M1 5h2l4-4v12l-4-4H1z" fill="#fff"/><circle cx="11" cy="11" r="5" fill="#d92c1e"/><path d="M9 9l4 4M13 9l-4 4" stroke="#fff" stroke-width="1.500"/></svg>
            </div>
            <div class="clock">11:38 AM<br>12/19/2014</div>
            <div class="show-desktop"></div>
        </footer>

        <!-- Callouts drawn over the window -->
        <div class="mark mark-row"></div>
        <div class="mark mark-area"></div>
        <div class="bubble">
            <svg class="tail" width="36" height="24"><path d="M8 0L1 22 32 0z" fill="#fff"/></svg>
            <p>Hidden line Linetype scales<br>are automattically setting to<br>0.2, .173, .153. But we need 1<br>Line type scale. Please<br>provide the setting to update<br>the our templates.</p>
        </div>
    </div>
</body>
</html>
```
FILE: styles.css
```
* {
    margin: 0;
    padding: 0;
    box-sizing: border-box;
}

body {
    width: 1920px;
    height: 1200px;
    overflow: hidden;
    font-family: "Open Sans", "Noto Sans", sans-serif;
    font-size: 12px;
    letter-spacing: -0.4px;
    color: #2b2f36;
    white-space: nowrap;
}

.app {
    position: relative;
    display: flex;
    flex-direction: column;
    height: 1200px;
    background: #676767;
}

svg {
    display: block;
    flex: none;
}

.caret {
    flex: none;
    width: 0;
    height: 0;
    border: 3.5px solid transparent;
    border-top: 4px solid #333;
    border-bottom: 0;
}

.caret.up {
    border-top: 0;
    border-bottom: 4px solid #333;
}

/* title bar */
.titlebar {
    display: flex;
    height: 23px;
    background: linear-gradient(90deg, #62788a, #718797 35%, #8ca2b3 45%, #70818e 60%, #748592);
}

.quick-access {
    display: flex;
    align-items: center;
    width: 458px;
    padding-left: 46px;
    background: linear-gradient(#aaa, #808080);
}

.qi {
    width: 24px;
    height: 22px;
}

.quick-access > .caret {
    margin: 0 3px;
}

.quick-access > .redo {
    margin: 0 0 0 -1px;
}

.workspace,
.qa-more {
    display: flex;
    align-items: center;
    justify-content: flex-end;
    height: 20px;
    width: 179px;
    margin-left: 1px;
    padding-right: 2px;
    border: 1px solid #777;
    background: linear-gradient(#f4f4f4, #c8c8c8);
}

.workspace .caret {
    border-width: 4px 4px 0;
}

.qa-more {
    flex: 1;
    width: auto;
    margin: 0;
    padding-right: 4px;
    background: #aaa;
}

.qa-more .caret {
    border-top-color: #000;
}

.title {
    flex: 1;
    display: flex;
    gap: 13px;
    padding: 3px 0 0 258px;
    color: #000;
    text-shadow: 0 0 8px #dcebf5, 0 0 10px #cfe0ec;
}

.infocenter {
    display: flex;
    align-items: center;
    width: 443px;
    background: linear-gradient(#8c8c8c, #777);
    border-left: 1px solid #444;
}

.ic-arrow {
    display: flex;
    align-items: center;
    width: 13px;
    height: 22px;
    padding-left: 4px;
    background: #999;
}

.ic-search {
    width: 180px;
    height: 21px;
    padding: 4px 2px 0;
    border: 1px solid #888;
    background: #fafafa;
    color: #666;
    font-style: italic;
    line-height: 15px;
}

.ic-bino,
.ic-user,
.ic-x,
.ic-360 {
    width: 17px;
    height: 18px;
}

.ic-bino {
    margin: 0 7px 0 4px;
}

.sign-in {
    width: 88px;
    padding-left: 4px;
    color: #fff;
}

.ic-x {
    margin-left: 8px;
}

.ic-360 {
    margin: 0 3px 0 8px;
}

.help {
    width: 16px;
    height: 16px;
    margin: 0 7px 0 19px;
    border: 1px solid #222;
    border-radius: 50%;
    background: #fff;
    color: #25569a;
    line-height: 14px;
    text-align: center;
}

.window-controls {
    display: flex;
    width: 124px;
    padding: 0 4px 0 17px;
    background: linear-gradient(#abc3da, #b7d1ea);
}

.wc {
    display: flex;
    align-items: center;
    justify-content: center;
    width: 29px;
    height: 18px;
    border: 1px solid #60758a;
    border-top: 0;
    background: linear-gradient(#c8d6e4, #a4b8cc);
}

.wc.close {
    width: 45px;
    border-radius: 0 0 5px 0;
}

/* menu bar */
.menubar {
    display: grid;
    grid-template-columns: 42px 44px 48px 54px 62px 53px 51px 81px 62px 68px 49px 81px 56px 74px 57px 1fr 56px;
    height: 22px;
    padding: 2px 0 0 55px;
    border-top: 2px solid #333;
    background: linear-gradient(#989898, #555);
    color: #fff;
}

.doc-controls {
    margin: 1px 0 0 8px;
}

.app-button {
    position: absolute;
    left: 0;
    top: 0;
    width: 41px;
    height: 41px;
    display: flex;
    align-items: center;
    gap: 3px;
    padding-left: 4px;
    border: 1px solid #222;
    background: linear-gradient(#ccc, #777);
}

/* ribbon tabs */
.ribbon-tabs {
    display: grid;
    grid-template-columns: 55px 46px 59px 49px 57px 77px 49px 69px 56px 49px 62px 58px 64px 91px 84px 131px 47px 96px 90px 86px 80px 40px;
    height: 20px;
    padding-left: 4px;
    background: #3e3e3e;
    color: #fff;
    line-height: 22px;
}

.ribbon-tabs span {
    padding-left: 9px;
}

.ribbon-tabs .active {
    height: 17px;
    margin: 3px 1px 0;
    padding-left: 8px;
    border-radius: 2px 2px 0 0;
    background: linear-gradient(#d8d8d8, #fff);
    color: #222;
    line-height: 16px;
}

.ribbon-tabs svg {
    margin-top: 6px;
    margin-left: 4px;
}

/* ribbon */
.ribbon {
    display: flex;
    height: 100px;
    padding-bottom: 1px;
    border-top: 1px solid #fff;
    border-bottom: 2px solid #f4f4f4;
    background: linear-gradient(#d2d2d2, #8f8f8f);
}

.panel {
    display: flex;
    flex-direction: column;
    border-right: 1px solid #999;
    background: #fdfdfd;
}

.p-text { width: 325px; }
.p-dim { width: 285px; }
.p-lead { width: 272px; }
.p-table { width: 244px; }
.p-markup { width: 106px; }
.p-anno { width: 259px; }

.panel-body {
    position: relative;
    display: flex;
    height: 79px;
    padding-top: 5px;
}

.p-text .panel-body {
    padding-left: 7px;
}

.panel-title {
    position: relative;
    display: flex;
    align-items: center;
    justify-content: center;
    gap: 6px;
    height: 18px;
    padding-bottom: 1px;
    border-top: 1px solid #ccc;
    border-bottom: 1px solid #bbb;
    background: #efefef;
}

.panel-title .caret {
    border-width: 4px 4px 0;
}

.p-text .panel-title,
.p-dim .panel-title,
.p-lead .panel-title,
.p-table .panel-title {
    padding-right: 12px;
}

.launcher {
    position: absolute;
    right: 5px;
    top: 6px;
    width: 5px;
    height: 5px;
    border: solid #444;
    border-width: 0 1px 1px 0;
    background: linear-gradient(45deg, transparent 40%, #444 40% 60%, transparent 60%);
}

.big-btn {
    display: flex;
    flex-direction: column;
    align-items: center;
    padding-top: 3px;
    line-height: 15px;
    text-align: center;
}

.big-btn span {
    min-height: 38px;
    margin-top: 4px;
}

.big-btn > .caret {
    margin-top: -19px;
    border-width: 3px 2.5px 0;
}

.p-text .big-btn { width: 63px; }
.p-text .big-btn + .big-btn { width: 52px; }
.p-dim .big-btn { width: 82px; }
.p-lead .big-btn { width: 69px; }
.p-table .big-btn { width: 41px; }
.p-markup .big-btn { width: 54px; }
.p-markup .big-btn + .big-btn { width: 48px; }
.p-anno .big-btn { width: 121px; }

.p-anno .big-btn span,
.p-markup .big-btn + .big-btn span {
    margin-top: 3px;
}

.abc {
    display: flex;
    flex-direction: column;
    align-items: center;
    height: 30px;
    padding-top: 1px;
    font-size: 11px;
    font-weight: 600;
    letter-spacing: 1px;
    line-height: 13px;
}

.split {
    position: absolute;
    left: 65px;
    top: 57px;
    border-width: 3px 2.5px 0;
}

.controls {
    display: flex;
    flex-direction: column;
    gap: 2px;
}

.combo {
    display: flex;
    align-items: center;
    justify-content: space-between;
    width: 200px;
    height: 22px;
    padding: 0 3px 1px;
    border: 1px solid #c4c4c4;
    background: linear-gradient(#fcfcfc, #ececec);
}

.combo .caret {
    border-width: 4px 4px 0;
}

.combo.dim {
    justify-content: flex-end;
    border-color: #dadada;
    background: #f4f4f4;
}

.combo.dim .caret {
    border-top-color: #777;
}

.combo.find {
    padding: 1px 0 0 3px;
    border-color: #a9adb5;
    background: #fff;
    color: #666;
    font-style: italic;
}

.tools {
    display: flex;
    gap: 4px;
}

.grp {
    display: flex;
    height: 22px;
    border: 1px solid #c6c6c6;
    background: linear-gradient(#fbfbfb, #ebebeb);
}

.grp svg {
    width: 23px;
    height: 20px;
}

.grp svg:only-child {
    width: 22px;
}

.grp svg + svg,
.grp em {
    border-left: 1px solid #c6c6c6;
}

.grp em {
    display: flex;
    align-items: center;
    justify-content: center;
    width: 11px;
}

.grp em .caret {
    border-width: 3px 2.5px 0;
}

.list {
    margin-top: -1px;
    list-style: none;
    letter-spacing: -0.3px;
}

.list li {
    display: flex;
    align-items: center;
    gap: 4px;
    height: 24px;
}

.list svg {
    width: 18px;
    height: 18px;
}

/* drawing tabs */
.file-tabs {
    display: flex;
    height: 27px;
    padding: 3px 0 0 16px;
    border-top: 1px solid #888;
    border-bottom: 1px solid #aaa;
    background: linear-gradient(#a0a0a0, #939393);
}

.file-tab {
    display: flex;
    align-items: center;
    gap: 9px;
    width: 266px;
    height: 22px;
    padding: 0 0 1px 16px;
    background: linear-gradient(#adadad, #939393);
    clip-path: path("M0 22Q6 20 8 10Q9 0 16 0H248Q256 0 259 9Q262 20 266 22Z");
    color: #555;
    letter-spacing: -0.45px;
}

.file-tab.current {
    width: 272px;
    margin-left: -10px;
    background: linear-gradient(#dedede, #a8a8a8);
    clip-path: path("M0 22Q6 20 8 10Q9 0 16 0H252Q260 0 262 9Q264 20 272 22Z");
    color: #000;
}

.new-tab {
    display: flex;
    align-items: center;
    justify-content: center;
    width: 22px;
    height: 16px;
    margin-top: 3px;
    margin-left: -3px;
    border: 1px solid #555;
    border-radius: 2px 10px 2px 12px;
    background: #7b7b7b;
}

/* work area */
.workarea {
    display: flex;
    height: 946px;
    padding: 6px 0 0;
    border-bottom: 1px solid #000;
    background: #676767;
}

.properties {
    display: flex;
    flex-direction: column;
    width: 337px;
    height: 938px;
    border-radius: 0 4px 4px 0;
    background: #9f9f9f;
    border-bottom: 1px solid #999;
    color: #000;
}

.prop-title {
    display: flex;
    align-items: center;
    gap: 6px;
    height: 20px;
    padding-left: 2px;
    color: #111;
    letter-spacing: -0.25px;
}

.grip {
    width: 4px;
    height: 12px;
    background: repeating-linear-gradient(#333 0 1px, transparent 1px 3px);
}

.prop-body {
    flex: 1;
    padding: 11px 0 0 18px;
    border-right: 1px solid #bbb;
    border-radius: 4px 4px 4px 0;
    background: #efefef;
}

.selector {
    display: flex;
    align-items: center;
    gap: 3px;
    height: 25px;
    margin: 0 0 5px 2px;
}

.select {
    display: flex;
    align-items: center;
    justify-content: space-between;
    width: 229px;
    height: 23px;
    padding: 0 3px;
    border: 1px solid #777;
    border-radius: 2px;
    background: linear-gradient(#f2f2f2 50%, #d9d9d9 52%, #cfcfcf);
}

.select .caret {
    border-top-color: #000;
}

.sel-tools {
    display: flex;
    border: 1px solid #8c8c8c;
}

.sel-tools svg {
    width: 25px;
    height: 23px;
}

.sel-tools svg:first-child {
    width: 24px;
}

.sel-tools svg + svg {
    border-left: 1px solid #8c8c8c;
}

.group {
    width: 308px;
    margin-bottom: 3px;
}

.group h3 {
    display: flex;
    align-items: center;
    justify-content: space-between;
    height: 20px;
    padding: 0 9px 0 4px;
    border: 1px solid #888;
    background: linear-gradient(#b4b4b4, #9a9a9a);
    font-size: 12px;
    font-weight: 700;
}

.group h3 i {
    border: 4px solid transparent;
    border-top: 0;
    border-bottom: 4px solid #000;
}

dl {
    display: grid;
    grid-template-columns: 134px 1fr;
    border: 1px solid #8a8a8a;
    border-top: 0;
    letter-spacing: -0.3px;
}

.group dl {
    margin-left: 17px;
}

dt,
dd {
    display: flex;
    align-items: center;
    height: 19px;
    border-bottom: 1px solid #8a8a8a;
    background: #fff;
    color: #000;
}

dt {
    padding-left: 4px;
    border-right: 1px solid #8a8a8a;
    background: #efefef;
}

dd {
    padding-left: 2px;
    letter-spacing: -0.45px;
}

dt:last-of-type,
dd:last-of-type {
    height: 18px;
    border-bottom: 0;
}

.ro {
    background: #efefef;
}

.swatch {
    width: 10px;
    height: 10px;
    margin: 0 6px 0 1px;
    border: 1px solid #000;
    background: #0ff;
}

.ltype,
.lweight {
    width: 60px;
    height: 1px;
    margin: 0 6px 0 3px;
    background: #000;
}

.ltype {
    background: repeating-linear-gradient(90deg, #000 0 7px, transparent 7px 10px);
}

/* viewport */
.viewport {
    position: relative;
    display: flex;
    flex-direction: column;
    width: 1578px;
    height: 939px;
    margin-left: 5px;
    border: solid #999;
    border-width: 0 1px 0 1px;
    background: #efefef;
}

.drawing {
    width: 1575px;
    height: 923px;
    background: #212830;
    shape-rendering: crispEdges;
}

.drawing path.c,
.drawing path.w,
.drawing path.y,
.gap {
    fill: none;
    stroke: #0ff;
}

.drawing path.w { stroke: #fff; }
.drawing path.y { stroke: #ff0; }
.drawing path.thick { stroke-width: 2; }
.drawing path.gap { stroke: #212830; }

.grip-box {
    fill: #007fff;
    stroke: #666;
}

.drawing circle {
    shape-rendering: auto;
}

.compass {
    fill: #b4b6b8;
    font: bold 21px "Liberation Sans", sans-serif;
    text-anchor: middle;
}

.top {
    fill: #4c525b;
    font: bold 13px "Open Sans", sans-serif;
    text-anchor: middle;
    letter-spacing: -0.8px;
}

.wcs {
    fill: #666a72;
    font: 10px "DejaVu Sans", sans-serif;
    letter-spacing: 0.2px;
}

.view-label {
    position: absolute;
    left: 3px;
    top: 5px;
    color: #e8e8e8;
    letter-spacing: -0.2px;
}

.quick-props {
    position: absolute;
    left: 923px;
    top: 244px;
    display: flex;
    width: 333px;
    height: 114px;
    padding: 1px 0;
    background: #404040;
}

.qp-grip {
    width: 8px;
    height: 27px;
    margin: 3px 4px 0;
    background: repeating-linear-gradient(#404040 0 2px, transparent 2px 4px), repeating-linear-gradient(90deg, #ddd 0 2px, #404040 2px 4px);
}

.qp-body {
    width: 300px;
    padding: 1px 1px 1px 0;
    background: #efefef;
    color: #000;
}

.qp-head {
    display: flex;
    justify-content: space-between;
    height: 30px;
}

.qp-head .select {
    width: 270px;
    height: 25px;
}

.qp-btn {
    display: flex;
    align-items: center;
    justify-content: center;
    width: 24px;
    height: 24px;
    border: 1px solid #777;
    border-radius: 2px;
}

.qp-body dl {
    grid-template-columns: 113px 1fr;
    border-top: 1px solid #8a8a8a;
}

.command {
    position: absolute;
    left: 315px;
    top: 895px;
    display: flex;
    width: 946px;
    height: 27px;
    border: 1px solid #777;
}

.cmd-tools {
    display: flex;
    align-items: center;
    gap: 10px;
    width: 53px;
    padding-left: 3px;
    background: linear-gradient(rgba(112, 112, 112, .9), rgba(55, 55, 55, .9));
}

.cmd-tools i {
    width: 5px;
    height: 20px;
    margin-right: -3px;
    background: repeating-linear-gradient(90deg, transparent 0 2px, #555 2px 3px), repeating-linear-gradient(#999 0 2px, #555 2px 3px);
}

.cmd-input {
    flex: 1;
    display: flex;
    align-items: center;
    gap: 4px;
    padding: 0 5px;
    background: rgba(255, 255, 255, .7);
    color: #777;
    font: italic 11.6px "DejaVu Sans Mono", monospace;
    letter-spacing: 0;
}

.cmd-input span {
    flex: 1;
    margin: -1px 0 0 2px;
}

.cmd-input .up {
    border-width: 0 4px 4px;
}

.layout-tabs {
    display: flex;
    height: 16px;
    font: 12px/16px "Liberation Sans", sans-serif;
    letter-spacing: -0.65px;
    color: #000;
}

.nav {
    display: flex;
    width: 65px;
}

.nav svg {
    width: 15px;
    height: 16px;
    border-right: 1px solid #aaa;
    fill: #555;
    stroke: #555;
}

.lt {
    position: relative;
    width: 54px;
    padding-left: 7px;
    border-bottom: 1px solid #888;
}

.lt.on {
    width: 52px;
    margin-left: -6px;
    padding-left: 13px;
    background: #212830;
    clip-path: polygon(0 0, 100% 0, calc(100% - 5px) 100%, 7px 100%);
    color: #fff;
}

.lt:not(.on)::after {
    content: "";
    position: absolute;
    right: 4px;
    top: 1px;
    width: 1px;
    height: 15px;
    background: #555;
    transform: skewX(-18deg);
}

/* status bar */
.statusbar {
    display: flex;
    height: 22px;
    border-bottom: 1px solid #333;
    background: linear-gradient(#9a9a9a, #757575);
    color: #000;
}

.coords {
    width: 215px;
    padding-left: 12px;
    font: 12px/25px "Liberation Sans", sans-serif;
    letter-spacing: -0.6px;
}

.toggles {
    display: flex;
}

.toggles svg,
.b {
    width: 22px;
    height: 21px;
    border-right: 1px solid #555;
    background: linear-gradient(#c8c8c8, #a5a5a5);
}

.toggles .on {
    background: linear-gradient(#e4f3f6, #9fcbd8);
}

.status-right {
    display: flex;
    margin-left: auto;
}

.model,
.scale,
.drop {
    display: flex;
    align-items: center;
    width: 44px;
    height: 21px;
    padding: 1px 0 0 2px;
    border-right: 1px solid #555;
    background: linear-gradient(#c8c8c8, #a5a5a5);
    font: 12px "Liberation Sans", sans-serif;
    letter-spacing: -0.6px;
}

.scale {
    gap: 3px;
    width: 51px;
    margin-left: 12px;
    padding: 0;
    letter-spacing: 0;
}

.status-right em {
    width: 5px;
}

.tray {
    display: flex;
    width: 65px;
    height: 17px;
    margin: 2px 7px 0 2px;
    border: 1px solid #555;
    background: linear-gradient(90deg, #aaa, #bbb);
}

.tray svg {
    width: 21px;
    height: 15px;
}

.drop {
    width: 11px;
    padding-left: 1px;
}

/* taskbar */
.taskbar {
    display: flex;
    height: 40px;
    border-top: 1px solid #9fc3de;
    background: linear-gradient(100deg, #15588f, #1c6399 3%, #57a5d3 7%, #58a9d8 28%, #3b98cc 34%, #2f8ac5 40%, #2376bd 47%, #3080c4 51%, #2273b8 60%, #2a72b6 66%, #195ba5 76%, #2362a5 86%, #1c3f6f 91%, #1a3964);
}

.start {
    width: 40px;
    height: 39px;
    margin: 0 13px 0 7px;
}

.task {
    display: flex;
    align-items: center;
    justify-content: center;
    width: 59px;
    height: 39px;
    margin-right: 3px;
    border: 1px solid #16507e;
    border-radius: 3px;
    background: linear-gradient(135deg, rgba(255, 255, 255, .5), rgba(255, 255, 255, .15) 60%, rgba(160, 220, 255, .25));
    box-shadow: inset 0 0 0 1px rgba(255, 255, 255, .6);
}

.task.wide {
    width: 60px;
    margin-right: 1px;
}

.task svg {
    width: 32px;
    height: 32px;
}

.task text {
    fill: #fff;
    font: bold 17px "Liberation Sans", sans-serif;
}

.task .pro {
    font-size: 7px;
}

.stack {
    width: 50px;
    margin-right: 12px;
    box-shadow: inset 0 0 0 1px rgba(255, 255, 255, .6), 3px 0 0 -1px #8fc8ec, 4px 0 0 -1px #16507e, 7px 0 0 -1px #8fc8ec, 8px 0 0 -1px #16507e;
}

.lit {
    background: linear-gradient(135deg, #f2fbff, #a8d6ee);
}

.systray {
    display: flex;
    align-items: center;
    gap: 8px;
    margin-left: auto;
}

.systray svg:first-child {
    margin-right: 8px;
}

.clock {
    width: 72px;
    margin: 3px 1px 0 5px;
    color: #fff;
    line-height: 17px;
    text-align: center;
    letter-spacing: -0.35px;
}

.show-desktop {
    width: 14px;
    border: 1px solid #6f93b8;
    background: linear-gradient(135deg, #46719e, #1a3f6d);
}

/* callouts */
.mark {
    position: absolute;
    border: 4px solid #ff2a68;
    border-radius: 7px;
    box-shadow: 0 0 0 1px rgba(170, 30, 75, .7), 3px 4px 6px rgba(0, 0, 0, .45), inset 3px 4px 6px rgba(0, 0, 0, .3);
}

.mark-row {
    left: 13px;
    top: 331px;
    width: 342px;
    height: 26px;
}

.mark-area {
    left: 710px;
    top: 290px;
    width: 903px;
    height: 531px;
}

.bubble {
    position: absolute;
    left: 405px;
    top: 283px;
    width: 284px;
    height: 190px;
    padding: 28px 2px 0 0;
    border: 1px solid #999;
    border-radius: 20px;
    background: #fff;
    filter: drop-shadow(3px 4px 4px rgba(0, 0, 0, .5));
    color: #ff1616;
    font: 19px/21.4px "Liberation Sans", sans-serif;
    letter-spacing: -0.05px;
    text-align: center;
}

.tail {
    position: absolute;
    left: 181px;
    top: 187px;
}
```
